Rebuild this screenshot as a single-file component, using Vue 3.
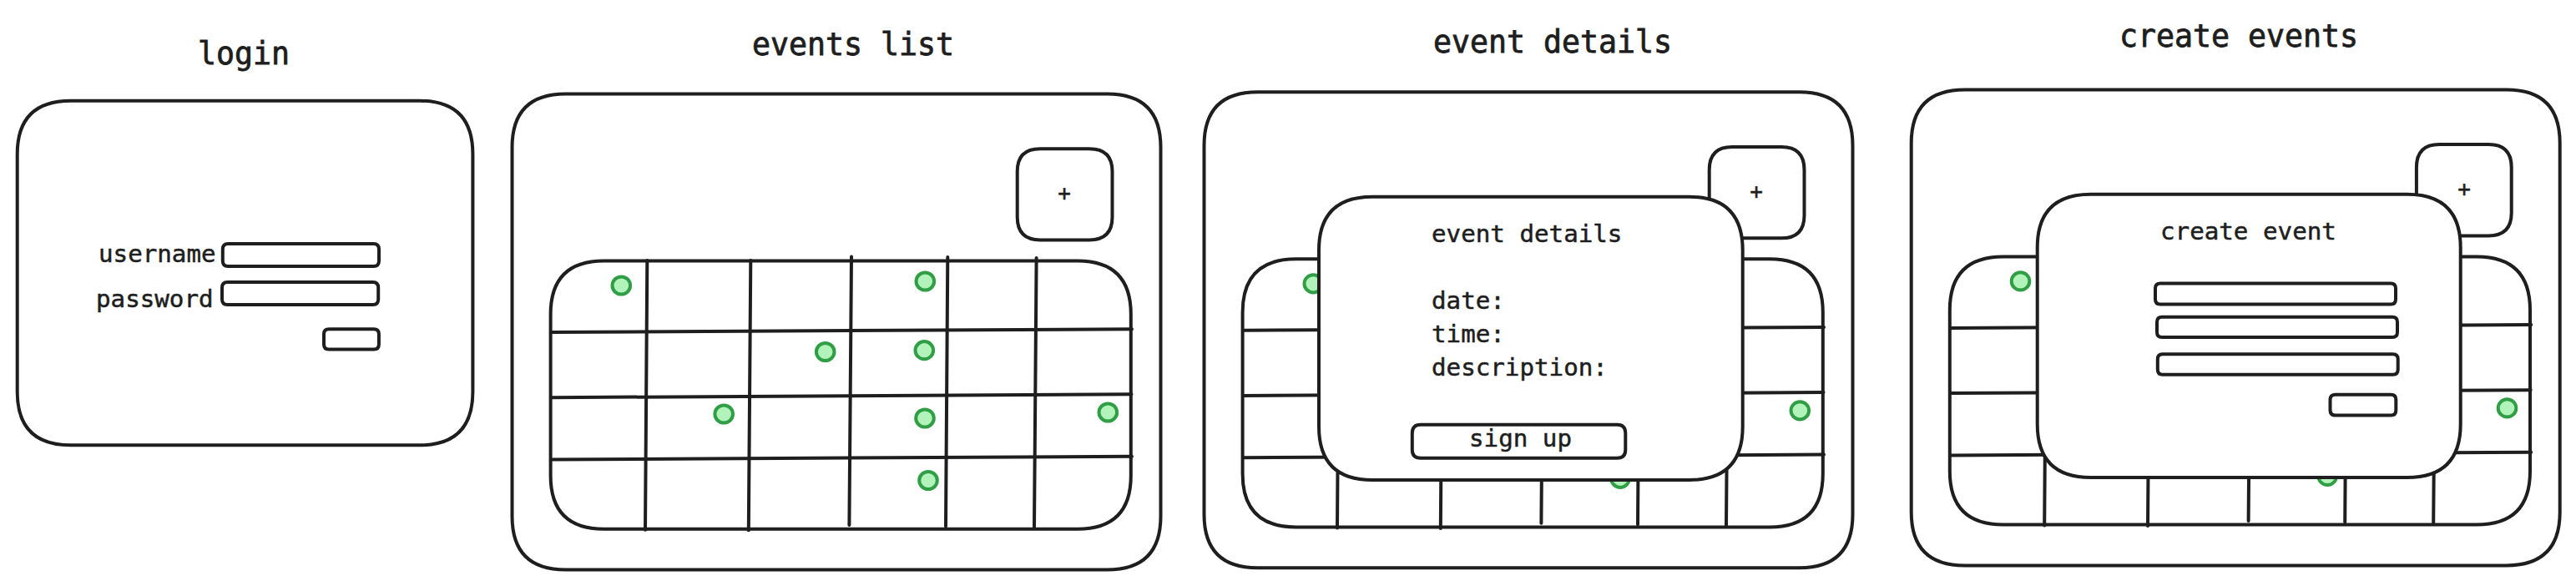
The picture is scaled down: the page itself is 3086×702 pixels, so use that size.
<script setup>
// Outline with softly curved corners, coordinates on the stroke's centre line
const box = (x, y, w, h, r) =>
  `M${x + r} ${y}H${x + w - r}Q${x + w} ${y} ${x + w} ${y + r}` +
  `V${y + h - r}Q${x + w} ${y + h} ${x + w - r} ${y + h}` +
  `H${x + r}Q${x} ${y + h} ${x} ${y + h - r}V${y + r}Q${x} ${y} ${x + r} ${y}Z`

const gridLines = [
  [161.8, 199.5, 159.5, 522.2],
  [285.8, 199.5, 283.3, 522.7],
  [406.5, 195, 403.9, 516.5],
  [521.8, 195.5, 519.5, 518],
  [628.1, 196.5, 625.5, 519],
  [47.5, 285.5, 742.5, 281.7],
  [47.5, 363.7, 742, 359.8],
  [47.5, 438, 742.5, 434.3],
]

const dots = [
  [130.8, 229.5],
  [494.8, 224.5],
  [375.2, 309],
  [493.8, 307.2],
  [253.7, 383.5],
  [494.5, 388.5],
  [713.8, 381.5],
  [498.5, 463],
]

const calendars = [
  { id: 'list', title: 'events list', shift: 'translate(0.5 0.5)' },
  { id: 'details', title: 'event details', shift: 'translate(0.5 0.3)' },
  { id: 'create', title: 'create events', shift: 'translate(-0.3 0.4)' },
]
</script>

<template>
  <main class="board">
    <section class="screen login">
      <h2 class="title">login</h2>
      <div class="frame">
        <svg class="ink"><path :d="box(-0.3, -0.3, 545.7, 412.6, 64)" /></svg>
        <div class="row user">
          <label>username</label>
          <svg class="field"><path :d="box(-0.2, 0, 187.2, 27, 6.5)" /></svg>
        </div>
        <div class="row pass">
          <label>password</label>
          <svg class="field"><path :d="box(0, 0.1, 187.2, 27, 6.5)" /></svg>
        </div>
        <svg class="field submit"><path :d="box(0, 0.2, 65.9, 24.4, 6)" /></svg>
      </div>
    </section>

    <section v-for="c in calendars" :key="c.id" class="screen" :class="c.id">
      <h2 class="title">{{ c.title }}</h2>
      <div class="frame">
        <svg class="ink">
          <g :transform="c.shift">
            <path :d="box(0, 0, 777, 570, 64)" />
            <path :d="box(605.2, 65.7, 113.8, 109.3, 27.4)" />
            <path :d="box(46.1, 200, 695.2, 321.2, 64)" />
            <line v-for="(l, i) in gridLines" :key="'l' + i" :x1="l[0]" :y1="l[1]" :x2="l[2]" :y2="l[3]" />
            <ellipse v-for="(d, i) in dots" :key="'d' + i" class="dot" :cx="d[0]" :cy="d[1]" rx="10.8" ry="10.6" />
          </g>
        </svg>
        <div class="add">+</div>

        <div v-if="c.id === 'details'" class="modal">
          <svg class="ink"><path class="paper" :d="box(0, -0.2, 507.7, 339.2, 64)" /></svg>
          <div class="info">
            <h3>event details</h3>
            <p>date:</p>
            <p>time:</p>
            <p>description:</p>
          </div>
          <div class="signup">
            <svg class="ink"><path :d="box(-0.2, -0.2, 255.5, 40, 10)" /></svg>
            <span>sign up</span>
          </div>
        </div>

        <div v-if="c.id === 'create'" class="modal">
          <svg class="ink"><path class="paper" :d="box(-0.3, -0.3, 507, 339.3, 64)" /></svg>
          <h3>create event</h3>
          <svg class="field first"><path :d="box(0, -0.5, 288, 25, 6)" /></svg>
          <svg class="field second"><path :d="box(0, -0.3, 288, 24.3, 6)" /></svg>
          <svg class="field third"><path :d="box(-0.2, 0.2, 287.9, 24.6, 6)" /></svg>
          <svg class="field save"><path :d="box(-0.5, -0.2, 78.8, 24.7, 6)" /></svg>
        </div>
      </div>
    </section>
  </main>
</template>

<style>
body {
  background: #fff;
}
</style>

<style scoped>
.board {
  display: flex;
  align-items: flex-start;
  width: 3086px;
  height: 702px;
  overflow: hidden;
  background: #fff;
  color: #1e1e1e;
  font-family: "DejaVu Sans Mono", monospace;
  font-size: 29.2px;
  line-height: 40px;
  -webkit-text-stroke: 0.5px #1e1e1e;
}
.title {
  margin: 0;
  box-sizing: border-box;
  font-size: 36.54px;
  font-weight: 400;
  line-height: 43px;
  white-space: nowrap;
  -webkit-text-stroke-width: 0.8px;
}
h3,
p {
  margin: 0;
  font-size: inherit;
  font-weight: 400;
  white-space: nowrap;
}
.screen {
  flex: none;
  width: 777px;
}
.frame {
  position: relative;
  width: 777px;
  height: 570px;
  box-sizing: border-box;
}

.ink {
  position: absolute;
  inset: 0;
  width: 100%;
  height: 100%;
  overflow: visible;
}
.field {
  display: block;
  flex: none;
  width: 288px;
  height: 25px;
  overflow: visible;
}
path,
line {
  fill: none;
  stroke: #1e1e1e;
  stroke-width: 4;
  stroke-linecap: round;
}
.paper {
  fill: #fff;
}
.dot {
  fill: #b2f2bb;
  stroke: #2f9e44;
  stroke-width: 4;
}

/* login */
.login {
  width: 545px;
  margin-left: 21px;
}
.login .title {
  height: 121px;
  padding: 43px 0 0 216px;
}
.login .frame {
  width: 545px;
  height: 412px;
  padding-top: 163px;
}
.row {
  display: flex;
  height: 40px;
}
.row label {
  width: 149px;
}
.row .field {
  width: 187px;
  height: 27px;
}
.user {
  padding-left: 97px;
}
.user .field {
  margin-top: 8px;
}
.pass {
  margin-top: 14px;
  padding-left: 94px;
}
.pass label {
  width: 151px;
}
.pass .field {
  margin-top: 0;
}
.submit {
  width: 66px;
  height: 25px;
  margin: 16px 0 0 367px;
}

/* calendar screens */
.list {
  margin-left: 47px;
}
.list .title {
  height: 112px;
  padding: 32px 0 0 288px;
}
.details {
  margin-left: 52px;
}
.details .title {
  height: 110px;
  padding: 29px 0 0 275px;
}
.create {
  margin-left: 71px;
}
.create .title {
  height: 107px;
  padding: 22px 0 0 249px;
}
.add {
  display: flex;
  align-items: center;
  justify-content: center;
  width: 114px;
  height: 109px;
  margin: 0 0 0 605px;
  position: relative;
  top: 64px;
  font-size: 26px;
  -webkit-text-stroke-width: 0.5px;
}

/* dialogs over the calendar */
.modal {
  position: absolute;
  left: 138px;
  top: 126px;
  width: 507px;
  height: 339px;
  box-sizing: border-box;
  padding-top: 24px;
}
.create .modal {
  left: 151px;
}
.info,
.modal h3,
.signup span {
  position: relative;
}
.info {
  padding-left: 135px;
}
.info h3 {
  margin-bottom: 40px;
}
.signup {
  position: relative;
  width: 255px;
  height: 40px;
  box-sizing: border-box;
  margin: 49px 0 0 112px;
  padding-left: 68px;
  line-height: 32px;
}
.create h3 {
  margin-left: 147px;
}
.create .field {
  position: relative;
}
.first {
  margin: 43px 0 0 141px;
}
.second {
  margin: 15px 0 0 143px;
}
.third {
  margin: 19px 0 0 144px;
}
.save {
  margin: 24px 0 0 351px;
}
</style>
